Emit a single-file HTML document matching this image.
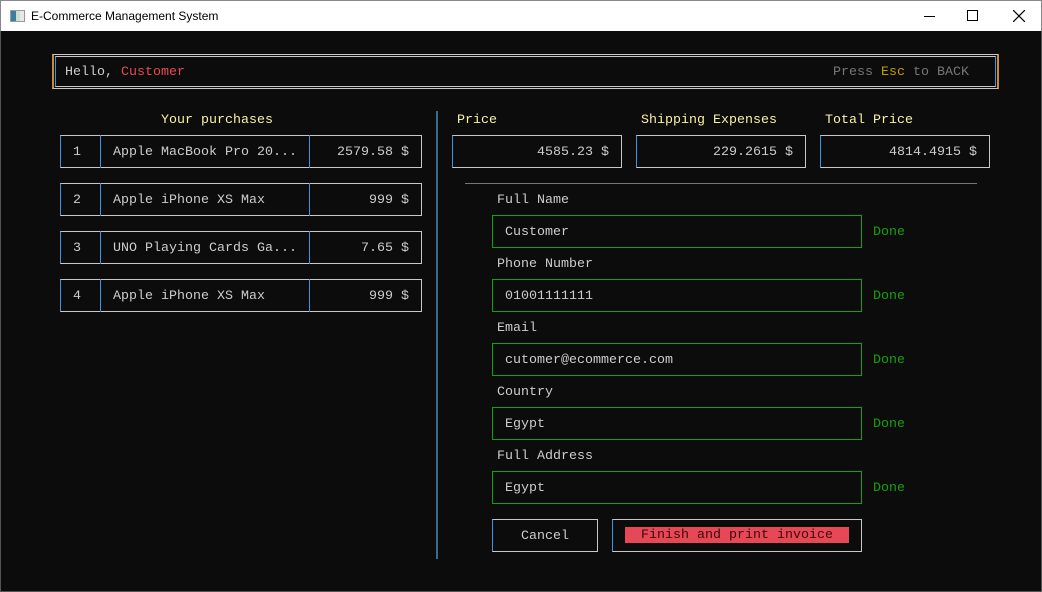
<!DOCTYPE html>
<html><head><meta charset="utf-8"><style>
*{margin:0;padding:0;box-sizing:border-box}
html,body{width:1042px;height:592px;overflow:hidden;background:#0c0c0c}
body{position:relative;font-family:"Liberation Mono",monospace;font-size:13.33px;color:#cccccc}
.a{position:absolute;white-space:pre;margin-top:2px}
.tb{position:absolute;left:0;top:0;width:1042px;height:31px;background:#fff;border:1px solid #888;border-bottom:none}
.tt{position:absolute;left:30px;top:8px;font-family:"Liberation Sans",sans-serif;font-size:12px;color:#000}
.box{position:absolute;border:1px solid #c8c8c8;border-left:1px solid #3a96dd}
.g{position:absolute;border:1px solid #13a10e}
.y{color:#f9f1a5}
.done{color:#13a10e}
.v{position:absolute;width:1px;height:33px;background:#3a96dd}
</style></head><body>
<div class="tb">
 <div style="position:absolute;left:9px;top:9px;width:15px;height:12px;border:1px solid #999;background:linear-gradient(90deg,#3a7fa0 0 40%,#c8e0c8 40% 70%,#e8e8e8 70%)"></div>
 <div class="tt">E-Commerce Management System</div>
 <div style="position:absolute;left:923px;top:15px;width:11px;height:1px;background:#000"></div>
 <div style="position:absolute;left:966px;top:9px;width:11px;height:11px;border:1px solid #000"></div>
 <svg style="position:absolute;left:1012px;top:9px" width="12" height="12"><path d="M0 0L12 12M12 0L0 12" stroke="#000" stroke-width="1.2"/></svg>
</div>
<div style="position:absolute;left:0;top:31px;width:1px;height:561px;background:#555"></div>
<div style="position:absolute;right:0;top:31px;width:1px;height:561px;background:#555"></div>
<div style="position:absolute;left:0;bottom:0;width:1042px;height:1px;background:#555"></div>

<div style="position:absolute;left:52px;top:54px;width:947px;height:35px;border:1px solid #c8c8c8;border-left:2px solid #c98a3a;border-right:2px solid #c98a3a"></div>
<div style="position:absolute;left:55px;top:56px;width:941px;height:31px;border:1px solid #c8c8c8;border-left-color:#3a96dd;border-right-color:#3a96dd"></div>
<div class="a" style="left:65px;top:63px">Hello, <span style="color:#e74856">Customer</span></div>
<div class="a" style="left:833px;top:63px;color:#767676">Press <span style="color:#c19c00">Esc</span> to BACK</div>

<div class="a y" style="left:161px;top:111px">Your purchases</div>
<div class="box" style="left:60px;top:135px;width:362px;height:33px"></div>
<div class="box" style="left:60px;top:183px;width:362px;height:33px"></div>
<div class="box" style="left:60px;top:231px;width:362px;height:33px"></div>
<div class="box" style="left:60px;top:279px;width:362px;height:33px"></div>
<div class="v" style="left:100px;top:135px"></div><div class="v" style="left:309px;top:135px"></div>
<div class="v" style="left:100px;top:183px"></div><div class="v" style="left:309px;top:183px"></div>
<div class="v" style="left:100px;top:231px"></div><div class="v" style="left:309px;top:231px"></div>
<div class="v" style="left:100px;top:279px"></div><div class="v" style="left:309px;top:279px"></div>
<div class="a" style="left:73px;top:143px">1</div><div class="a" style="left:113px;top:143px">Apple MacBook Pro 20...</div><div class="a" style="left:337px;top:143px">2579.58 $</div>
<div class="a" style="left:73px;top:191px">2</div><div class="a" style="left:113px;top:191px">Apple iPhone XS Max</div><div class="a" style="left:369px;top:191px">999 $</div>
<div class="a" style="left:73px;top:239px">3</div><div class="a" style="left:113px;top:239px">UNO Playing Cards Ga...</div><div class="a" style="left:361px;top:239px">7.65 $</div>
<div class="a" style="left:73px;top:287px">4</div><div class="a" style="left:113px;top:287px">Apple iPhone XS Max</div><div class="a" style="left:369px;top:287px">999 $</div>

<div style="position:absolute;left:436px;top:111px;width:2px;height:448px;background:#3a6a90"></div>

<div class="a y" style="left:457px;top:111px">Price</div>
<div class="a y" style="left:641px;top:111px">Shipping Expenses</div>
<div class="a y" style="left:825px;top:111px">Total Price</div>
<div class="box" style="left:452px;top:135px;width:170px;height:33px"></div>
<div class="box" style="left:636px;top:135px;width:170px;height:33px"></div>
<div class="box" style="left:820px;top:135px;width:170px;height:33px"></div>
<div class="a" style="left:537px;top:143px">4585.23 $</div>
<div class="a" style="left:713px;top:143px">229.2615 $</div>
<div class="a" style="left:889px;top:143px">4814.4915 $</div>
<div style="position:absolute;left:465px;top:183px;width:512px;height:1px;background:#767676"></div>

<div class="a" style="left:497px;top:191px">Full Name</div>
<div class="g" style="left:492px;top:215px;width:370px;height:33px"></div>
<div class="a" style="left:505px;top:223px">Customer</div><div class="a done" style="left:873px;top:223px">Done</div>
<div class="a" style="left:497px;top:255px">Phone Number</div>
<div class="g" style="left:492px;top:279px;width:370px;height:33px"></div>
<div class="a" style="left:505px;top:287px">01001111111</div><div class="a done" style="left:873px;top:287px">Done</div>
<div class="a" style="left:497px;top:319px">Email</div>
<div class="g" style="left:492px;top:343px;width:370px;height:33px"></div>
<div class="a" style="left:505px;top:351px">cutomer@ecommerce.com</div><div class="a done" style="left:873px;top:351px">Done</div>
<div class="a" style="left:497px;top:383px">Country</div>
<div class="g" style="left:492px;top:407px;width:370px;height:33px"></div>
<div class="a" style="left:505px;top:415px">Egypt</div><div class="a done" style="left:873px;top:415px">Done</div>
<div class="a" style="left:497px;top:447px">Full Address</div>
<div class="g" style="left:492px;top:471px;width:370px;height:33px"></div>
<div class="a" style="left:505px;top:479px">Egypt</div><div class="a done" style="left:873px;top:479px">Done</div>

<div class="box" style="left:492px;top:519px;width:106px;height:33px"></div>
<div class="a" style="left:521px;top:527px">Cancel</div>
<div class="box" style="left:612px;top:519px;width:250px;height:33px"></div>
<div style="position:absolute;left:625px;top:527px;width:224px;height:16px;background:#e74856"></div>
<div class="a" style="left:641px;top:526px;color:#3a0a0a">Finish and print invoice</div>
</body></html>
